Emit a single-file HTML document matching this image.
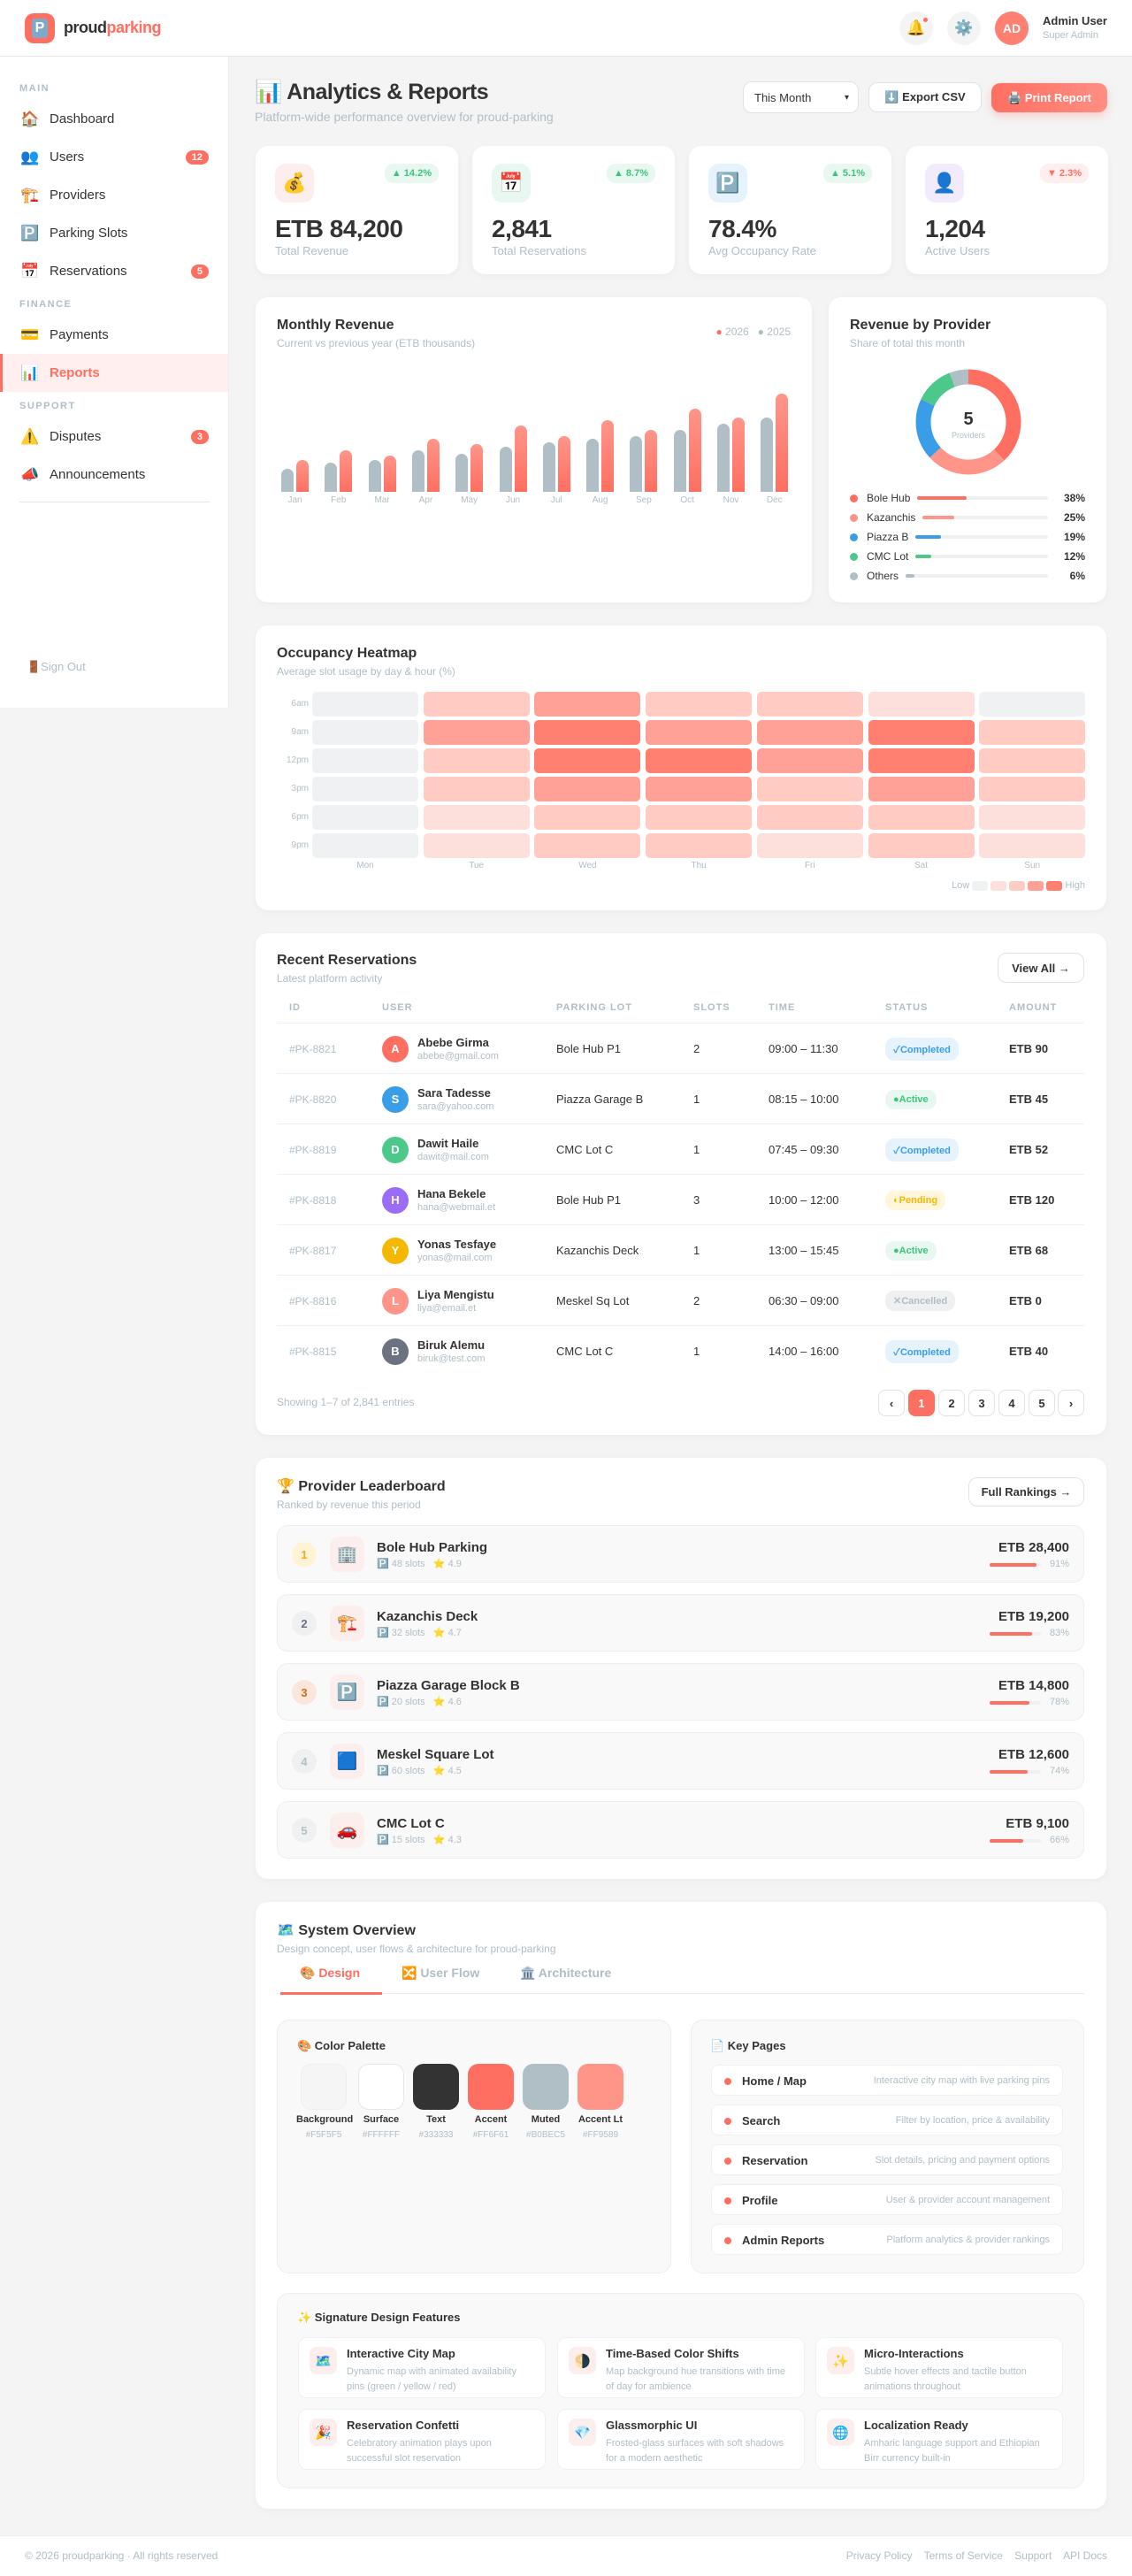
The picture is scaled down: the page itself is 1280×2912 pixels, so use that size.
<!DOCTYPE html>
<html><head><meta charset="utf-8">
<style>
*{box-sizing:border-box;margin:0;padding:0}
body{width:1280px;height:2912px;background:#f4f4f4;font-family:"Liberation Sans","Noto Sans CJK SC",sans-serif;color:#333;position:relative;overflow:hidden}
.abs{position:absolute}
.hdr{left:0;top:0;width:1280px;height:64px;background:#fff;border-bottom:1px solid #e6e6e6}
.side{left:0;top:64px;width:259px;height:736px;background:#fff;border-right:1px solid #eee}
.sl{position:absolute;left:22px;font-size:11px;font-weight:bold;letter-spacing:1.5px;color:#b0bec5}
.si{position:absolute;left:0;width:258px;height:43px;display:flex;align-items:center;padding-left:23px;font-size:15px;color:#333}
.si .ic{width:33px;font-size:17px}
.si .bd{position:absolute;right:22px;background:#ff6f61;color:#fff;font-size:11px;font-weight:bold;border-radius:8px;padding:2px 7px}
.card{position:absolute;background:#fff;border-radius:14px;box-shadow:0 2px 8px rgba(0,0,0,.04)}
.t{font-size:16px;font-weight:bold;color:#333}
.st{font-size:12px;color:#b0bec5;margin-top:4px}
.stat{top:165px;width:229px;height:145px}
.stat .ib{position:absolute;left:22px;top:20px;width:44px;height:44px;border-radius:12px;display:flex;align-items:center;justify-content:center;font-size:22px}
.stat .bg{position:absolute;right:22px;top:20px;font-size:11px;font-weight:bold;padding:5px 8px;border-radius:10px}
.stat .v{position:absolute;left:22px;top:78px;font-size:28px;font-weight:bold;letter-spacing:-.5px}
.stat .l{position:absolute;left:22px;top:111px;font-size:13px;color:#b0bec5}
.up{background:#e8f8f0;color:#3cc47c}.dn{background:#ffeeee;color:#ff6f61}
.bar{position:absolute;bottom:0;width:14px;border-radius:7px 7px 0 0}
.g{background:#b0bec5}.r{background:linear-gradient(#ff9589,#ff6f61)}
.hm{position:absolute;width:120px;height:28px;border-radius:5px}
.c0{background:#f0f1f3}.c1{background:#fde0dc}.c2{background:#ffcbc3}.c3{background:#ffa196}.c4{background:#ff7f70}
.th{position:absolute;top:1133px;font-size:11px;font-weight:bold;letter-spacing:1px;color:#b0bec5}
.row{position:absolute;left:313px;width:913px;height:57px;border-top:1px solid #eef0f2;font-size:13px}
.row>div{position:absolute;top:0;height:57px;display:flex;align-items:center}
.av{width:30px;height:30px;border-radius:50%;color:#fff;font-size:13px;font-weight:bold;display:flex;align-items:center;justify-content:center}
.pill{font-size:11px;font-weight:bold;padding:5px 9px;border-radius:10px}
.pc{background:#e6f3fd;color:#3a9de8}.pa{background:#e8f8f0;color:#3cc47c}.pp{background:#fff6dc;color:#f5b800}.px{background:#eef0f2;color:#b0bec5}
.pg{position:absolute;top:1571px;width:30px;height:30px;border:1px solid #dde3e7;border-radius:8px;background:#fff;font-size:13px;font-weight:bold;display:flex;align-items:center;justify-content:center}
.btn{position:absolute;background:#fff;border:1.5px solid #dde3e7;border-radius:10px;font-size:13px;font-weight:bold;display:flex;align-items:center;justify-content:center}
.lb{position:absolute;left:313px;width:913px;height:65px;background:#f9f9f9;border:1px solid #eee;border-radius:12px}
.lb .rk{position:absolute;left:16px;top:18px;width:28px;height:28px;border-radius:50%;display:flex;align-items:center;justify-content:center;font-size:13px;font-weight:bold}
.lb .ic{position:absolute;left:59px;top:12px;width:39px;height:40px;border-radius:10px;background:#fdeeee;display:flex;align-items:center;justify-content:center;font-size:19px}
.lb .nm{position:absolute;left:112px;top:16px;font-size:15px;font-weight:bold}
.lb .mt{position:absolute;left:112px;top:36px;font-size:11px;color:#b0bec5}
.lb .am{position:absolute;right:16px;top:16px;font-size:15px;font-weight:bold}
.lb .pb{position:absolute;right:48px;top:42px;width:58px;height:4px;background:#eef0f2;border-radius:2px}
.lb .pb i{display:block;height:4px;background:#ff6f61;border-radius:2px}
.lb .pt{position:absolute;right:16px;top:37px;font-size:11px;color:#b0bec5}
.sw{position:absolute;top:2333px;width:52px;height:52px;border-radius:12px}
.swl{position:absolute;top:2390px;width:62px;text-align:center;font-size:11px;font-weight:bold}
.swh{position:absolute;top:2408px;width:62px;text-align:center;font-size:10px;color:#b0bec5}
.kp{position:absolute;left:804px;width:398px;height:35px;background:#fff;border-radius:8px;border:1px solid #f0f0f0}
.kp i{position:absolute;left:14px;top:14px;width:8px;height:8px;border-radius:50%;background:#ff6f61}
.kp b{position:absolute;left:34px;top:10px;font-size:13px}
.kp span{position:absolute;right:14px;top:11px;font-size:11px;color:#b0bec5}
.ft{position:absolute;width:280px;height:69px;background:#fff;border:1px solid #f0f0f0;border-radius:10px}
.ft .ic{position:absolute;left:12px;top:10px;width:31px;height:31px;border-radius:8px;background:#fdeeee;display:flex;align-items:center;justify-content:center;font-size:15px}
.ft b{position:absolute;left:54px;top:10px;font-size:13px}
.ft p{position:absolute;left:54px;top:30px;font-size:11px;color:#b0bec5;line-height:17px;width:215px}
.lg{position:absolute;left:24px;width:266px;height:14px;display:flex;align-items:center;font-size:12px}
.lg .d{width:9px;height:9px;border-radius:50%;margin-right:10px;flex:none}
.lg .tr{flex:1;height:4px;background:#eef0f2;border-radius:2px;margin:0 16px 0 8px}
.lg .tr i{display:block;height:4px;border-radius:2px}
.lg b{width:26px;text-align:right}
</style></head><body>

<div class="abs hdr">
  <div class="abs" style="left:28px;top:15px;width:34px;height:34px;border-radius:10px;background:#ff6f61;display:flex;align-items:center;justify-content:center"><div style="width:18px;height:22px;background:#7fa8c9;border-radius:3px;color:#fff;font-weight:bold;font-size:16px;text-align:center;line-height:22px">P</div></div>
  <div class="abs" style="left:72px;top:21px;font-size:18px;font-weight:bold;letter-spacing:-.5px">proud<span style="color:#ff6f61">parking</span></div>
  <div class="abs" style="left:1017px;top:13px;width:38px;height:38px;border-radius:50%;background:#f4f4f4;display:flex;align-items:center;justify-content:center;font-size:17px">🔔</div>
  <div class="abs" style="left:1044px;top:20px;width:5px;height:5px;border-radius:50%;background:#ff6f61"></div>
  <div class="abs" style="left:1071px;top:13px;width:38px;height:38px;border-radius:50%;background:#f4f4f4;display:flex;align-items:center;justify-content:center;font-size:17px">⚙️</div>
  <div class="abs" style="left:1125px;top:13px;width:38px;height:38px;border-radius:50%;background:#ff7f70;color:#fff;font-weight:bold;font-size:14px;display:flex;align-items:center;justify-content:center">AD</div>
  <div class="abs" style="left:1179px;top:16px;font-size:13px;font-weight:bold">Admin User</div>
  <div class="abs" style="left:1179px;top:34px;font-size:11px;color:#b0bec5">Super Admin</div>
</div>

<div class="abs side">
  <div class="sl" style="top:30px">MAIN</div>
  <div class="si" style="top:49px"><span class="ic">🏠</span>Dashboard</div>
  <div class="si" style="top:92px"><span class="ic">👥</span>Users<span class="bd">12</span></div>
  <div class="si" style="top:135px"><span class="ic">🏗️</span>Providers</div>
  <div class="si" style="top:178px"><span class="ic">🅿️</span>Parking Slots</div>
  <div class="si" style="top:221px"><span class="ic">📅</span>Reservations<span class="bd">5</span></div>
  <div class="sl" style="top:274px">FINANCE</div>
  <div class="si" style="top:293px"><span class="ic">💳</span>Payments</div>
  <div class="si" style="top:336px;background:#fff0ef;color:#ff6f61;font-weight:bold;border-left:3px solid #ff6f61;padding-left:20px"><span class="ic">📊</span>Reports</div>
  <div class="sl" style="top:389px">SUPPORT</div>
  <div class="si" style="top:408px"><span class="ic">⚠️</span>Disputes<span class="bd">3</span></div>
  <div class="si" style="top:451px"><span class="ic">📣</span>Announcements</div>
  <div class="abs" style="left:22px;top:503px;width:215px;height:1px;background:#e6e6e6"></div>
  <div class="abs" style="left:30px;top:682px;font-size:13px;color:#b0bec5">🚪Sign Out</div>
</div>

<div class="abs" style="left:288px;top:90px;font-size:25px;font-weight:bold;letter-spacing:-.5px">📊 Analytics &amp; Reports</div>
<div class="abs" style="left:288px;top:124px;font-size:14px;color:#b0bec5">Platform-wide performance overview for proud-parking</div>
<div class="btn" style="left:840px;top:92px;width:131px;height:36px;font-weight:normal;justify-content:space-between;padding:0 10px 0 12px">This Month <span style="font-size:10px">▾</span></div>
<div class="btn" style="left:982px;top:93px;width:128px;height:34px">⬇️ Export CSV</div>
<div class="btn" style="left:1121px;top:94px;width:131px;height:33px;background:linear-gradient(90deg,#ff6f61,#ff8e82);border:none;color:#fff;box-shadow:0 4px 10px rgba(255,111,97,.3)">🖨️ Print Report</div>

<div class="card stat" style="left:289px"><div class="ib" style="background:#fdeeee">💰</div><div class="bg up">▲ 14.2%</div><div class="v">ETB 84,200</div><div class="l">Total Revenue</div></div>
<div class="card stat" style="left:534px"><div class="ib" style="background:#e8f8f0">📅</div><div class="bg up">▲ 8.7%</div><div class="v">2,841</div><div class="l">Total Reservations</div></div>
<div class="card stat" style="left:779px"><div class="ib" style="background:#e6f3fd">🅿️</div><div class="bg up">▲ 5.1%</div><div class="v">78.4%</div><div class="l">Avg Occupancy Rate</div></div>
<div class="card stat" style="left:1024px"><div class="ib" style="background:#f1ebfd">👤</div><div class="bg dn">▼ 2.3%</div><div class="v">1,204</div><div class="l">Active Users</div></div>

<div class="card" style="left:289px;top:336px;width:629px;height:345px">
  <div style="position:absolute;left:24px;top:23px"><div class="t">Monthly Revenue</div><div class="st">Current vs previous year (ETB thousands)</div></div>
  <div style="position:absolute;right:24px;top:32px;font-size:12px;color:#b0bec5"><span style="color:#ff6f61">●</span> 2026 &nbsp; <span style="color:#b0bec5">●</span> 2025</div>
  <div id="bars" style="position:absolute;left:0;top:220px;width:629px;height:0"></div>
</div>

<div class="card" style="left:937px;top:336px;width:314px;height:345px">
  <div style="position:absolute;left:24px;top:23px"><div class="t">Revenue by Provider</div><div class="st">Share of total this month</div></div>
  <svg style="position:absolute;left:98px;top:81px" width="120" height="120" viewBox="0 0 120 120">
    <g transform="rotate(-90 60 60)" fill="none" stroke-width="17">
      <circle cx="60" cy="60" r="51" stroke="#ff6f61" stroke-dasharray="121.8 320.4" stroke-dashoffset="0"/>
      <circle cx="60" cy="60" r="51" stroke="#ff9589" stroke-dasharray="80.1 320.4" stroke-dashoffset="-121.8"/>
      <circle cx="60" cy="60" r="51" stroke="#3a9de8" stroke-dasharray="60.9 320.4" stroke-dashoffset="-201.9"/>
      <circle cx="60" cy="60" r="51" stroke="#4cc98a" stroke-dasharray="38.4 320.4" stroke-dashoffset="-262.8"/>
      <circle cx="60" cy="60" r="51" stroke="#b0bec5" stroke-dasharray="19.2 320.4" stroke-dashoffset="-301.2"/>
    </g>
    <text x="60" y="63" text-anchor="middle" font-family="Liberation Sans" font-weight="bold" font-size="20" fill="#333">5</text>
    <text x="60" y="78" text-anchor="middle" font-family="Liberation Sans" font-size="9" fill="#b0bec5">Providers</text>
  </svg>
  <div class="lg" style="top:220px"><i class="d" style="background:#ff6f61"></i>Bole Hub<span class="tr"><i style="width:38%;background:#ff6f61"></i></span><b>38%</b></div>
  <div class="lg" style="top:242px"><i class="d" style="background:#ff9589"></i>Kazanchis<span class="tr"><i style="width:25%;background:#ff9589"></i></span><b>25%</b></div>
  <div class="lg" style="top:264px"><i class="d" style="background:#3a9de8"></i>Piazza B<span class="tr"><i style="width:19%;background:#3a9de8"></i></span><b>19%</b></div>
  <div class="lg" style="top:286px"><i class="d" style="background:#4cc98a"></i>CMC Lot<span class="tr"><i style="width:12%;background:#4cc98a"></i></span><b>12%</b></div>
  <div class="lg" style="top:308px"><i class="d" style="background:#b0bec5"></i>Others<span class="tr"><i style="width:6%;background:#b0bec5"></i></span><b>6%</b></div>
</div>

<div class="card" style="left:289px;top:707px;width:962px;height:322px">
  <div style="position:absolute;left:24px;top:23px"><div class="t">Occupancy Heatmap</div><div class="st">Average slot usage by day &amp; hour (%)</div></div>
</div>
<div id="hm"></div>
<div class="abs" style="right:53px;top:995px;font-size:11px;color:#b0bec5;display:flex;align-items:center;gap:3px">Low <i class="c0" style="width:18px;height:11px;border-radius:3px;display:inline-block"></i><i class="c1" style="width:18px;height:11px;border-radius:3px;display:inline-block"></i><i class="c2" style="width:18px;height:11px;border-radius:3px;display:inline-block"></i><i class="c3" style="width:18px;height:11px;border-radius:3px;display:inline-block"></i><i class="c4" style="width:18px;height:11px;border-radius:3px;display:inline-block"></i> High</div>

<div class="card" style="left:289px;top:1055px;width:962px;height:567px">
  <div style="position:absolute;left:24px;top:22px"><div class="t">Recent Reservations</div><div class="st">Latest platform activity</div></div>
</div>
<div class="btn" style="left:1128px;top:1077px;width:98px;height:34px">View All →</div>
<div class="th" style="left:327px">ID</div><div class="th" style="left:432px">USER</div><div class="th" style="left:629px">PARKING LOT</div><div class="th" style="left:784px">SLOTS</div><div class="th" style="left:869px">TIME</div><div class="th" style="left:1001px">STATUS</div><div class="th" style="left:1141px">AMOUNT</div>
<div id="rows"></div>
<div class="abs" style="left:313px;top:1578px;font-size:12px;color:#b0bec5">Showing 1–7 of 2,841 entries</div>
<div class="pg" style="left:993px">‹</div><div class="pg" style="left:1027px;background:#ff6f61;border-color:#ff6f61;color:#fff">1</div><div class="pg" style="left:1061px">2</div><div class="pg" style="left:1095px">3</div><div class="pg" style="left:1129px">4</div><div class="pg" style="left:1163px">5</div><div class="pg" style="left:1196px">›</div>

<div class="card" style="left:289px;top:1648px;width:962px;height:476px">
  <div style="position:absolute;left:24px;top:22px"><div class="t">🏆 Provider Leaderboard</div><div class="st">Ranked by revenue this period</div></div>
</div>
<div class="btn" style="left:1095px;top:1670px;width:131px;height:33px">Full Rankings →</div>
<div id="lbs"></div>

<div class="card" style="left:289px;top:2150px;width:962px;height:686px">
  <div style="position:absolute;left:24px;top:22px"><div class="t">🗺️ System Overview</div><div class="st">Design concept, user flows &amp; architecture for proud-parking</div></div>
</div>
<div class="abs" style="left:313px;top:2253px;width:913px;height:1px;background:#eaeaea"></div>
<div class="abs" style="left:317px;top:2252px;width:115px;height:3px;background:#ff6f61"></div>
<div class="abs" style="left:339px;top:2222px;font-size:14px;font-weight:bold;color:#ff6f61">🎨 Design</div>
<div class="abs" style="left:454px;top:2222px;font-size:14px;font-weight:bold;color:#b0bec5">🔀 User Flow</div>
<div class="abs" style="left:588px;top:2222px;font-size:14px;font-weight:bold;color:#b0bec5">🏛️ Architecture</div>

<div class="abs" style="left:313px;top:2283px;width:446px;height:287px;background:#f9f9f9;border:1px solid #eee;border-radius:14px"></div>
<div class="abs" style="left:336px;top:2305px;font-size:13px;font-weight:bold">🎨 Color Palette</div>
<div class="sw" style="left:340px;background:#f5f5f5;border:1px solid #eee"></div>
<div class="sw" style="left:405px;background:#fff;border:1px solid #e6e6e6"></div>
<div class="sw" style="left:467px;background:#333"></div>
<div class="sw" style="left:529px;background:#ff6f61"></div>
<div class="sw" style="left:591px;background:#b0bec5"></div>
<div class="sw" style="left:653px;background:#ff9589"></div>
<div class="swl" style="left:335px">Background</div><div class="swl" style="left:400px">Surface</div><div class="swl" style="left:462px">Text</div><div class="swl" style="left:524px">Accent</div><div class="swl" style="left:586px">Muted</div><div class="swl" style="left:648px">Accent Lt</div>
<div class="swh" style="left:335px">#F5F5F5</div><div class="swh" style="left:400px">#FFFFFF</div><div class="swh" style="left:462px">#333333</div><div class="swh" style="left:524px">#FF6F61</div><div class="swh" style="left:586px">#B0BEC5</div><div class="swh" style="left:648px">#FF9589</div>

<div class="abs" style="left:781px;top:2283px;width:445px;height:287px;background:#f9f9f9;border:1px solid #eee;border-radius:14px"></div>
<div class="abs" style="left:803px;top:2305px;font-size:13px;font-weight:bold">📄 Key Pages</div>
<div class="kp" style="top:2334px"><i></i><b>Home / Map</b><span>Interactive city map with live parking pins</span></div>
<div class="kp" style="top:2379px"><i></i><b>Search</b><span>Filter by location, price &amp; availability</span></div>
<div class="kp" style="top:2424px"><i></i><b>Reservation</b><span>Slot details, pricing and payment options</span></div>
<div class="kp" style="top:2469px"><i></i><b>Profile</b><span>User &amp; provider account management</span></div>
<div class="kp" style="top:2514px"><i></i><b>Admin Reports</b><span>Platform analytics &amp; provider rankings</span></div>

<div class="abs" style="left:313px;top:2592px;width:913px;height:221px;background:#f9f9f9;border:1px solid #eee;border-radius:14px"></div>
<div class="abs" style="left:336px;top:2612px;font-size:13px;font-weight:bold">✨ Signature Design Features</div>
<div class="ft" style="left:337px;top:2642px"><div class="ic">🗺️</div><b>Interactive City Map</b><p>Dynamic map with animated availability pins (green / yellow / red)</p></div>
<div class="ft" style="left:630px;top:2642px"><div class="ic">🌗</div><b>Time-Based Color Shifts</b><p>Map background hue transitions with time of day for ambience</p></div>
<div class="ft" style="left:922px;top:2642px"><div class="ic">✨</div><b>Micro-Interactions</b><p>Subtle hover effects and tactile button animations throughout</p></div>
<div class="ft" style="left:337px;top:2723px"><div class="ic">🎉</div><b>Reservation Confetti</b><p>Celebratory animation plays upon successful slot reservation</p></div>
<div class="ft" style="left:630px;top:2723px"><div class="ic">💎</div><b>Glassmorphic UI</b><p>Frosted-glass surfaces with soft shadows for a modern aesthetic</p></div>
<div class="ft" style="left:922px;top:2723px"><div class="ic">🌐</div><b>Localization Ready</b><p>Amharic language support and Ethiopian Birr currency built-in</p></div>

<div class="abs" style="left:0;top:2866px;width:1280px;height:46px;background:#fff;border-top:1px solid #ececec"></div>
<div class="abs" style="left:28px;top:2882px;font-size:12px;color:#b0bec5">© 2026 proudparking · All rights reserved</div>
<div class="abs" style="right:28px;top:2882px;font-size:12px;color:#b0bec5">Privacy Policy &nbsp;&nbsp; Terms of Service &nbsp;&nbsp; Support &nbsp;&nbsp; API Docs</div>

<script>
var g=[26,33,36,47,43,51,56,60,63,70,77,84],r=[36,47,41,60,54,75,63,81,70,94,84,111],m=["Jan","Feb","Mar","Apr","May","Jun","Jul","Aug","Sep","Oct","Nov","Dec"],h="";
for(var i=0;i<12;i++){var x=29+i*49.3;h+='<div class="bar g" style="left:'+x+'px;height:'+g[i]+'px"></div><div class="bar r" style="left:'+(x+17)+'px;height:'+r[i]+'px"></div><div style="position:absolute;left:'+(x-8)+'px;top:4px;width:47px;text-align:center;font-size:10px;color:#b0bec5">'+m[i]+'</div>';}
document.getElementById("bars").innerHTML=h;
var H=[[0,2,3,2,2,1,0],[0,3,4,3,3,4,2],[0,2,4,4,3,4,2],[0,2,3,3,2,3,2],[0,1,2,2,2,2,1],[0,1,2,2,1,2,1]],T=["6am","9am","12pm","3pm","6pm","9pm"],D=["Mon","Tue","Wed","Thu","Fri","Sat","Sun"];h="";
H.forEach(function(row,j){var y=782+j*32;h+='<div class="abs" style="left:300px;width:49px;text-align:right;top:'+(y+8)+'px;font-size:10px;color:#b0bec5">'+T[j]+'</div>';row.forEach(function(v,c){h+='<div class="hm c'+v+'" style="left:'+(353+c*125.7)+'px;top:'+y+'px"></div>';});});
D.forEach(function(d,c){h+='<div class="abs" style="left:'+(353+c*125.7)+'px;width:120px;text-align:center;top:973px;font-size:10px;color:#b0bec5">'+d+'</div>';});
document.getElementById("hm").innerHTML=h;
var R=[["8821","A","#ff6f61","Abebe Girma","abebe@gmail.com","Bole Hub P1",2,"09:00 – 11:30","pc","✓Completed","90"],["8820","S","#3a9de8","Sara Tadesse","sara@yahoo.com","Piazza Garage B",1,"08:15 – 10:00","pa","●Active","45"],["8819","D","#4cc98a","Dawit Haile","dawit@mail.com","CMC Lot C",1,"07:45 – 09:30","pc","✓Completed","52"],["8818","H","#9b6cf5","Hana Bekele","hana@webmail.et","Bole Hub P1",3,"10:00 – 12:00","pp","◐Pending","120"],["8817","Y","#f5b800","Yonas Tesfaye","yonas@mail.com","Kazanchis Deck",1,"13:00 – 15:45","pa","●Active","68"],["8816","L","#ff9589","Liya Mengistu","liya@email.et","Meskel Sq Lot",2,"06:30 – 09:00","px","✕Cancelled","0"],["8815","B","#6b7280","Biruk Alemu","biruk@test.com","CMC Lot C",1,"14:00 – 16:00","pc","✓Completed","40"]];h="";
R.forEach(function(a,k){var y=1156+k*57;h+='<div class="row" style="top:'+y+'px"><div style="left:14px;color:#b0bec5;font-size:12px">#PK-'+a[0]+'</div><div style="left:119px"><div class="av" style="background:'+a[2]+'">'+a[1]+'</div></div><div style="left:159px;flex-direction:column;align-items:flex-start;justify-content:center"><b style="font-size:13px">'+a[3]+'</b><span style="font-size:11px;color:#b0bec5;margin-top:2px">'+a[4]+'</span></div><div style="left:316px">'+a[5]+'</div><div style="left:471px">'+a[6]+'</div><div style="left:556px">'+a[7]+'</div><div style="left:688px"><span class="pill '+a[8]+'">'+a[9]+'</span></div><div style="left:828px;font-weight:bold">ETB '+a[10]+'</div></div>';});
document.getElementById("rows").innerHTML=h;
var P=[["1","#fff3d6","#f5a623","🏢","Bole Hub Parking",48,"4.9","28,400",91],["2","#eef0f2","#6b7280","🏗️","Kazanchis Deck",32,"4.7","19,200",83],["3","#fbe6dc","#d2691e","🅿️","Piazza Garage Block B",20,"4.6","14,800",78],["4","#eef0f2","#b0bec5","🟦","Meskel Square Lot",60,"4.5","12,600",74],["5","#eef0f2","#b0bec5","🚗","CMC Lot C",15,"4.3","9,100",66]];h="";
P.forEach(function(p,k){var y=1724+k*78;h+='<div class="lb" style="top:'+y+'px"><div class="rk" style="background:'+p[1]+';color:'+p[2]+'">'+p[0]+'</div><div class="ic">'+p[3]+'</div><div class="nm">'+p[4]+'</div><div class="mt">🅿️ '+p[5]+' slots &nbsp; ⭐ '+p[6]+'</div><div class="am">ETB '+p[7]+'</div><div class="pb"><i style="width:'+p[8]+'%"></i></div><div class="pt">'+p[8]+'%</div></div>';});
document.getElementById("lbs").innerHTML=h;
</script>
</body></html>
